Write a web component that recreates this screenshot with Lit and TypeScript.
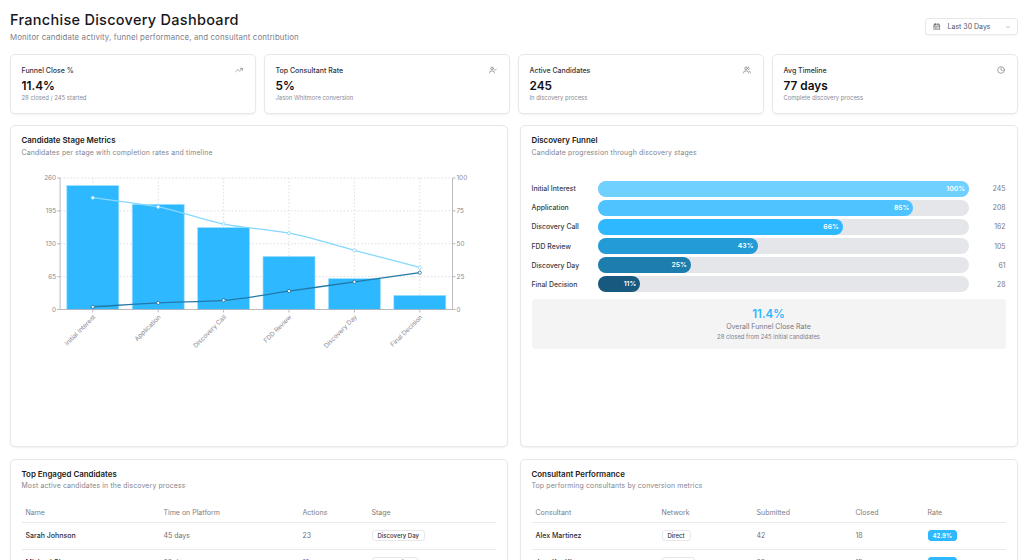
import { LitElement, css, html, svg } from 'lit';
import { customElement } from 'lit/decorators.js';

const stages = ['Initial Interest', 'Application', 'Discovery Call', 'FDD Review', 'Discovery Day', 'Final Decision'];
const counts = [245, 208, 162, 105, 61, 28];
const completion = [85, 78, 65, 58, 45, 32];
const timeline = [2, 5, 7, 14, 21, 28];
const funnelPct = [100, 85, 66, 43, 25, 11.4];
const funnelColors = ['#70d0ff', '#4fc3ff', '#2eb8ff', '#239bd6', '#1d7dad', '#17597f'];

// plot area, in the same numbers as the svg viewBox
const L = 59.6, R = 452, T = 178, B = 309.5;
const band = (R - L) / 6;
const cx = (i: number) => L + band * (i + 0.5);
const yLeft = (v: number) => B - (v / 260) * (B - T);
const yRight = (v: number) => B - (v / 100) * (B - T);

// monotone cubic through the points, like recharts' "monotone" line
function curve(pts: [number, number][]) {
  const n = pts.length;
  const d: number[] = [];
  const m: number[] = [];
  for (let i = 0; i < n - 1; i++) d.push((pts[i + 1][1] - pts[i][1]) / (pts[i + 1][0] - pts[i][0]));
  m[0] = d[0];
  m[n - 1] = d[n - 2];
  for (let i = 1; i < n - 1; i++) m[i] = d[i - 1] * d[i] <= 0 ? 0 : (2 * d[i - 1] * d[i]) / (d[i - 1] + d[i]);
  let p = `M${pts[0][0]},${pts[0][1]}`;
  for (let i = 0; i < n - 1; i++) {
    const h = (pts[i + 1][0] - pts[i][0]) / 3;
    p += `C${pts[i][0] + h},${pts[i][1] + m[i] * h} ${pts[i + 1][0] - h},${pts[i + 1][1] - m[i + 1] * h} ${pts[i + 1][0]},${pts[i + 1][1]}`;
  }
  return p;
}

const icons = {
  trend: svg`<polyline points="22 7 13.5 15.5 8.5 10.5 2 17"/><polyline points="16 7 22 7 22 13"/>`,
  userCheck: svg`<path d="M16 21v-2a4 4 0 0 0-4-4H6a4 4 0 0 0-4 4v2"/><circle cx="9" cy="7" r="4"/><polyline points="16 11 18 13 22 9"/>`,
  users: svg`<path d="M16 21v-2a4 4 0 0 0-4-4H6a4 4 0 0 0-4 4v2"/><circle cx="9" cy="7" r="4"/><path d="M22 21v-2a4 4 0 0 0-3-3.87"/><path d="M16 3.13a4 4 0 0 1 0 7.75"/>`,
  clock: svg`<circle cx="12" cy="12" r="10"/><polyline points="12 6 12 12 16 14"/>`,
  calendar: svg`<path d="M8 2v4"/><path d="M16 2v4"/><rect x="3" y="4" width="18" height="18" rx="2"/><path d="M3 10h18"/><path d="M8 14h.01"/><path d="M12 14h.01"/><path d="M16 14h.01"/><path d="M8 18h.01"/><path d="M12 18h.01"/><path d="M16 18h.01"/>`,
  chevron: svg`<path d="m6 9 6 6 6-6"/>`,
};

const icon = (name: keyof typeof icons, cls = 'ico') =>
  html`<svg class=${cls} viewBox="0 0 24 24" fill="none" stroke="currentColor" stroke-width="2" stroke-linecap="round" stroke-linejoin="round">${icons[name]}</svg>`;

const kpis: [string, string, string, keyof typeof icons][] = [
  ['Funnel Close %', '11.4%', '28 closed / 245 started', 'trend'],
  ['Top Consultant Rate', '5%', 'Jason Whitmore conversion', 'userCheck'],
  ['Active Candidates', '245', 'In discovery process', 'users'],
  ['Avg Timeline', '77 days', 'Complete discovery process', 'clock'],
];

const candidates = [
  ['Sarah Johnson', '45 days', '23', 'Discovery Day'],
  ['Michael Chen', '38 days', '19', 'FDD Review'],
];
const consultants = [
  ['Alex Martinez', 'Direct', '42', '18', '42.9%'],
  ['Jennifer Kim', 'Partner', '38', '15', '39.5%'],
];

@customElement('app-root')
export class AppRoot extends LitElement {
  private chart() {
    const light = completion.map((v, i) => [cx(i), yRight(v)] as [number, number]);
    const dark = timeline.map((v, i) => [cx(i), yRight(v)] as [number, number]);
    return html`
      <svg class="chart" viewBox="21.5 165 474 200">
        ${[0, 1, 2, 3].map((i) => svg`<line class="grid" x1=${L} x2=${R} y1=${T + (i * (B - T)) / 4} y2=${T + (i * (B - T)) / 4}/>`)}
        ${stages.map((_, i) => svg`<line class="grid" x1=${cx(i)} x2=${cx(i)} y1=${T} y2=${B}/>`)}
        ${counts.map((v, i) => svg`<rect class="bar" x=${cx(i) - 26} y=${yLeft(v)} width="52" height=${B - yLeft(v)}/>`)}
        <line class="axis" x1=${L} x2=${L} y1=${T} y2=${B}/>
        <line class="axis" x1=${R} x2=${R} y1=${T} y2=${B}/>
        <line class="axis" x1=${L} x2=${R} y1=${B} y2=${B}/>
        ${[0, 65, 130, 195, 260].map((v) => svg`
          <line class="axis" x1=${L - 3} x2=${L} y1=${yLeft(v)} y2=${yLeft(v)}/>
          <text class="tick" x=${L - 4} y=${yLeft(v) + 2.3} text-anchor="end">${v}</text>`)}
        ${[0, 25, 50, 75, 100].map((v) => svg`
          <line class="axis" x1=${R} x2=${R + 3} y1=${yRight(v)} y2=${yRight(v)}/>
          <text class="tick" x=${R + 4} y=${yRight(v) + 2.3}>${v}</text>`)}
        ${stages.map((s, i) => svg`
          <line class="axis" x1=${cx(i)} x2=${cx(i)} y1=${B} y2=${B + 3}/>
          <text class="tick" text-anchor="end" transform="translate(${cx(i) + 3} ${B + 8}) rotate(-45)">${s}</text>`)}
        <path class="line-a" d=${curve(light)}/>
        <path class="line-b" d=${curve(dark)}/>
        ${light.map(([x, y]) => svg`<circle class="dot-a" cx=${x} cy=${y} r="1.6"/>`)}
        ${dark.map(([x, y]) => svg`<circle class="dot-b" cx=${x} cy=${y} r="1.6"/>`)}
      </svg>
    `;
  }

  private funnel() {
    return html`
      <div class="funnel">
        ${stages.map((s, i) => html`
          <div class="f-row">
            <span class="f-label">${s}</span>
            <div class="track">
              <div class="fill" style="width:${funnelPct[i]}%;background:${funnelColors[i]}">${Math.round(funnelPct[i])}%</div>
            </div>
            <span class="f-count">${counts[i]}</span>
          </div>
        `)}
      </div>
      <div class="summary">
        <div class="s-value">11.4%</div>
        <div class="s-label">Overall Funnel Close Rate</div>
        <div class="s-note">28 closed from 245 initial candidates</div>
      </div>
    `;
  }

  render() {
    return html`
      <header class="top">
        <div>
          <h1>Franchise Discovery Dashboard</h1>
          <p>Monitor candidate activity, funnel performance, and consultant contribution</p>
        </div>
        <button class="range">
          ${icon('calendar', 'ico cal')}
          <span>Last 30 Days</span>
          ${icon('chevron', 'ico chev')}
        </button>
      </header>

      <section class="kpis">
        ${kpis.map(([label, value, note, ic]) => html`
          <div class="card kpi">
            <div class="k-head"><span>${label}</span>${icon(ic)}</div>
            <div class="k-value">${value}</div>
            <div class="k-note">${note}</div>
          </div>
        `)}
      </section>

      <section class="two big">
        <div class="card panel">
          <h2>Candidate Stage Metrics</h2>
          <p class="sub">Candidates per stage with completion rates and timeline</p>
          ${this.chart()}
        </div>
        <div class="card panel">
          <h2>Discovery Funnel</h2>
          <p class="sub">Candidate progression through discovery stages</p>
          ${this.funnel()}
        </div>
      </section>

      <section class="two">
        <div class="card panel">
          <h2>Top Engaged Candidates</h2>
          <p class="sub">Most active candidates in the discovery process</p>
          <table>
            <colgroup><col style="width:138px"/><col style="width:139px"/><col style="width:69px"/><col/></colgroup>
            <thead><tr><th>Name</th><th>Time on Platform</th><th>Actions</th><th>Stage</th></tr></thead>
            <tbody>
              ${candidates.map((r) => html`<tr>
                <td class="name">${r[0]}</td><td>${r[1]}</td><td>${r[2]}</td>
                <td><span class="badge">${r[3]}</span></td>
              </tr>`)}
            </tbody>
          </table>
        </div>
        <div class="card panel">
          <h2>Consultant Performance</h2>
          <p class="sub">Top performing consultants by conversion metrics</p>
          <table>
            <colgroup><col style="width:126px"/><col style="width:95px"/><col style="width:99px"/><col style="width:72px"/><col/></colgroup>
            <thead><tr><th>Consultant</th><th>Network</th><th>Submitted</th><th>Closed</th><th>Rate</th></tr></thead>
            <tbody>
              ${consultants.map((r) => html`<tr>
                <td class="name">${r[0]}</td><td><span class="badge">${r[1]}</span></td><td>${r[2]}</td><td>${r[3]}</td>
                <td><span class="badge rate">${r[4]}</span></td>
              </tr>`)}
            </tbody>
          </table>
        </div>
      </section>
    `;
  }

  static styles = css`
    :host {
      display: block;
      box-sizing: border-box;
      height: 560px;
      overflow: hidden;
      padding: 10px 6.5px 0 9.5px;
      background: white;
      font-family: Inter, 'Open Sans', sans-serif;
      color: #6f6f7a;
    }

    h1, h2, p { margin: 0; font-weight: 400; }

    .top {
      display: flex;
      justify-content: space-between;
      align-items: flex-start;
      height: 43.5px;
    }

    h1 {
      font-size: 14.5px;
      line-height: 18px;
      letter-spacing: 0.28px;
      font-weight: 500;
      color: #17171c;
      padding: 1px 0 0 0.5px;
    }

    .top p {
      font-size: 7.85px;
      line-height: 11px;
      margin-top: 3px;
      padding-left: 0.5px;
      letter-spacing: 0.12px;
      color: #7d7d87;
    }

    .range {
      display: flex;
      align-items: center;
      box-sizing: border-box;
      width: 92.5px;
      height: 17px;
      margin-top: 8px;
      padding: 0 6px 0 7px;
      border: 1px solid #e8e8ec;
      border-radius: 3px;
      background: white;
      font: inherit;
      font-size: 7px;
      color: #55555f;
      box-shadow: 0 1px 1px rgba(0, 0, 0, 0.04);
    }

    .range span { margin-left: 7px; flex: 1; text-align: left; }
    .ico { width: 8px; height: 8px; color: #77777f; flex: none; }
    .cal { width: 7.5px; height: 7.5px; color: #4f4f58; }
    .chev { width: 6px; height: 6px; }

    .card {
      box-sizing: border-box;
      background: white;
      border: 1px solid #e8e8ec;
      border-radius: 5px;
      box-shadow: 0 1px 2px rgba(0, 0, 0, 0.06);
    }

    .kpis {
      display: grid;
      grid-template-columns: repeat(4, 246px);
      gap: 8px;
    }

    .kpi { height: 60px; padding: 11px 11.5px 0 11px; }

    .k-head {
      display: flex;
      justify-content: space-between;
      align-items: center;
      font-size: 7px;
      line-height: 9px;
      color: #33333b;
      font-weight: 500;
    }

    .k-value {
      font-size: 11.8px;
      line-height: 16px;
      margin-top: 3.5px;
      font-weight: 600;
      color: #111116;
    }

    .k-note { font-size: 5.9px; line-height: 8px; margin-top: 0; color: #8b8b94; }

    .two {
      display: grid;
      grid-template-columns: 498px 498px;
      gap: 12px;
      margin-top: 11.5px;
    }

    .big .panel { height: 322px; }

    .panel { padding: 9px 11px; }

    h2 {
      font-size: 7.9px;
      line-height: 10px;
      font-weight: 600;
      color: #1b1b21;
    }

    .sub {
      font-size: 6.9px;
      line-height: 9px;
      margin-top: 2.5px;
      color: #85858e;
      letter-spacing: 0.15px;
    }

    .chart { display: block; width: 474px; height: 200px; margin-top: 8px; }
    .grid { stroke: #d6d6db; stroke-width: 0.8; stroke-dasharray: 1.5 2; }
    .axis { stroke: #a8a8b0; stroke-width: 0.8; }
    .tick { font-size: 6.4px; fill: #8a8a93; }
    .bar { fill: #2eb8ff; stroke: #9fe0ff; stroke-width: 0.7; }
    .line-a { fill: none; stroke: #86d8ff; stroke-width: 1.3; }
    .line-b { fill: none; stroke: #2279a8; stroke-width: 1.3; }
    .dot-a { fill: white; stroke: #86d8ff; stroke-width: 0.8; }
    .dot-b { fill: white; stroke: #1d6d98; stroke-width: 0.8; }

    .funnel {
      display: flex;
      flex-direction: column;
      gap: 3.6px;
      margin-top: 24.5px;
    }

    .f-row { display: flex; align-items: center; height: 15.5px; }

    .f-label {
      width: 66.5px;
      flex: none;
      font-size: 6.9px;
      font-weight: 500;
      color: #3b3b44;
    }

    .track {
      width: 371px;
      height: 15.5px;
      flex: none;
      border-radius: 8px;
      background: #e5e6ea;
    }

    .fill {
      box-sizing: border-box;
      height: 100%;
      padding-right: 4px;
      border-radius: 8px;
      font-size: 6.8px;
      line-height: 15.5px;
      font-weight: 600;
      text-align: right;
      color: white;
    }

    .f-count { flex: 1; font-size: 6.9px; text-align: right; color: #77777f; }

    .summary {
      box-sizing: border-box;
      height: 49.5px;
      margin-top: 7.5px;
      padding-top: 8px;
      border-radius: 4px;
      background: #f4f4f5;
      text-align: center;
    }

    .s-value { font-size: 11.5px; line-height: 14px; font-weight: 600; color: #2eb8ff; }
    .s-label { font-size: 7px; line-height: 10px; margin-top: 0.5px; color: #77777f; }
    .s-note { font-size: 5.9px; line-height: 9px; margin-top: 0.5px; color: #80808a; }

    table {
      width: 474px;
      table-layout: fixed;
      border-collapse: collapse;
      margin-top: 12px;
      font-size: 7px;
    }

    th {
      height: 20px;
      padding: 0 4px;
      text-align: left;
      font-weight: 400;
      color: #7c7c85;
    }

    td { height: 25.5px; padding: 0 4px; color: #6f6f78; }
    tr { border-bottom: 1px solid #eaeaed; }
    td.name { font-weight: 500; color: #2c2c33; }

    .badge {
      display: inline-block;
      box-sizing: border-box;
      height: 11px;
      padding: 0 5px;
      border: 1px solid #e8e8ec;
      border-radius: 3px;
      font-size: 6px;
      line-height: 9px;
      font-weight: 500;
      color: #33333b;
    }

    .badge.rate {
      padding: 0 4px;
      background: #2eb8ff;
      border-color: #2eb8ff;
      color: white;
      font-weight: 600;
    }
  `;
}

declare global {
  interface HTMLElementTagNameMap {
    'app-root': AppRoot;
  }
}
